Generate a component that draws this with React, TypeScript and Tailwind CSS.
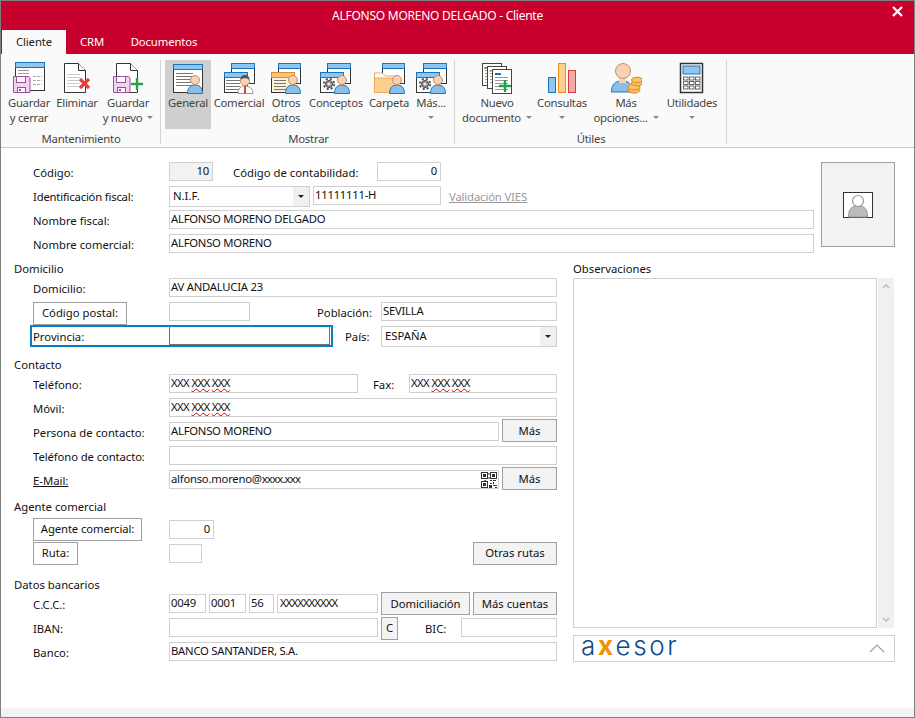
import React from "react";

const S = ({ children }: { children: React.ReactNode }) => (
  <svg width="32" height="32" viewBox="0 0 32 32" className="shrink-0">{children}</svg>
);

const Win = ({ x, y, w, h, bar = "#8fc6f0", barStroke = "#1a74bb", fill = "#fff", stroke = "#333" }: any) => (
  <g>
    <rect x={x + 0.5} y={y + 0.5} width={w} height={h} fill={fill} stroke={stroke} />
    <rect x={x + 0.5} y={y + 0.5} width={w} height={5} fill={bar} stroke={barStroke} />
  </g>
);

const Lines = ({ x, y, w, n = 4, c = "#777" }: any) => (
  <g stroke={c}>
    {Array.from({ length: n }).map((_, i) => (
      <line key={i} x1={x} x2={x + w} y1={y + i * 3 + 0.5} y2={y + i * 3 + 0.5} />
    ))}
  </g>
);

const Person = ({ cx, cy = 18 }: any) => (
  <g>
    <path d={`M${cx - 7.5} 31.5 C${cx - 7.5} ${cy + 7},${cx - 4} ${cy + 5},${cx} ${cy + 5} C${cx + 4} ${cy + 5},${cx + 7.5} ${cy + 7},${cx + 7.5} 31.5 Z`} fill="#8bbfe8" stroke="#1f78b8" />
    <circle cx={cx} cy={cy} r="4.5" fill="#f7d2b4" stroke="#c58f5e" />
  </g>
);

const Gear = ({ cx, cy }: any) => (
  <g fill="none">
    <circle cx={cx} cy={cy} r="5.2" stroke="#555" strokeWidth="1.800" strokeDasharray="2.200 1.900" />
    <circle cx={cx} cy={cy} r="3.600" fill="#888" stroke="#555" />
    <circle cx={cx} cy={cy} r="1.600" fill="#eee" />
  </g>
);

const Floppy = ({ x, y }: any) => (
  <g>
    <path d={`M${x + 0.5} ${y + 0.5}h15l1.5 1.5v14.5h-16.5z`} fill="#f0d4ee" stroke="#9c4da0" />
    <rect x={x + 3.5} y={y + 0.5} width={9} height={6} fill="#fff" stroke="#9c4da0" />
    <rect x={x + 4.5} y={y + 11.5} width={8} height={5} fill="#fff" stroke="#9c4da0" />
    <rect x={x + 6} y={y + 13} width={2} height={2} fill="#9c4da0" />
  </g>
);

const Doc = ({ x, y, w, h }: any) => (
  <g>
    <path d={`M${x + 0.5} ${y + 0.5}h${w - 7}l7 7v${h - 7}h-${w}z`} fill="#fff" stroke="#333" />
    <path d={`M${x + w - 6.5} ${y + 0.5}v7h7`} fill="#fff" stroke="#333" />
  </g>
);

const Plus = ({ cx, cy, r = 6 }: any) => (
  <g stroke="#1fa34a" strokeWidth="2.400">
    <line x1={cx - r} x2={cx + r} y1={cy} y2={cy} />
    <line x1={cx} x2={cx} y1={cy - r} y2={cy + r} />
  </g>
);

const IconGuardarCerrar = () => (
  <S>
    <Win x={2} y={0} w={29} h={28} />
    <Lines x={5} y={8} w={11} n={2} c="#999" />
    <g stroke="#aaa" strokeDasharray="3 1">
      <line x1="20" x2="29" y1="14.500" y2="14.500" />
      <line x1="20" x2="29" y1="18.500" y2="18.500" />
      <line x1="20" x2="29" y1="22.500" y2="22.500" />
    </g>
    <Floppy x={0} y={14} />
  </S>
);
const IconEliminar = () => (
  <S>
    <Doc x={3} y={1} w={21} h={29} />
    <Lines x={6} y={12} w={13} n={5} c="#ccc" />
    <g stroke="#e8413c" strokeWidth="3.200">
      <line x1="19" x2="28" y1="17" y2="26" />
      <line x1="28" x2="19" y1="17" y2="26" />
    </g>
  </S>
);
const IconGuardarNuevo = () => (
  <S>
    <Doc x={4} y={1} w={21} h={29} />
    <Floppy x={1} y={14} />
    <Plus cx={25} cy={22} />
  </S>
);
const IconGeneral = () => (
  <S>
    <Win x={1} y={2} w={29} h={28} />
    <Lines x={4} y={11} w={17} n={5} />
    <Person cx={23} cy={18} />
  </S>
);
const IconComercial = () => (
  <S>
    <Win x={8} y={1} w={23} h={20} />
    <Win x={1} y={10} w={23} h={20} />
    <Lines x={3} y={18} w={14} n={4} />
    <path d="M15 31.500c0-5 3-7.500 7-7.500s8 2.500 8 7.500z" fill="#fff" stroke="#999" />
    <circle cx="22" cy="19" r="4.500" fill="#f7d2b4" stroke="#c58f5e" />
    <path d="M17.500 18c0-4 2-5 4.500-5s4.500 1 4.500 5c-2-2.500-7-2.500-9 0z" fill="#555" />
    <path d="M21 24h2v7.500h-2z" fill="#e2373c" />
  </S>
);
const IconOtros = () => (
  <S>
    <Win x={8} y={1} w={22} h={20} />
    <Win x={1} y={10} w={23} h={20} bar="#f9c77c" barStroke="#e08a2c" fill="#fdf1d6" />
    <Lines x={4} y={18} w={12} n={4} />
    <Person cx={23} />
  </S>
);
const IconConceptos = () => (
  <S>
    <Win x={7} y={1} w={23} h={20} />
    <Win x={0} y={10} w={23} h={20} />
    <Gear cx={9} cy={22} />
    <Person cx={22} />
  </S>
);
const IconCarpeta = () => (
  <S>
    <Win x={9} y={1} w={22} h={20} />
    <path d="M1.500 11h8l3 3h11v16h-22z" fill="#fff" stroke="#eea95a" />
    <path d="M1.500 16h24v14.500h-24z" fill="#fbcf8d" stroke="#eea95a" />
    <Person cx={24} />
  </S>
);
const IconMas = () => (
  <S>
    <Win x={8} y={1} w={23} h={20} />
    <Win x={1} y={10} w={23} h={20} />
    <Gear cx={10} cy={22} />
    <Person cx={23} />
  </S>
);
const IconNuevo = () => (
  <S>
    <rect x="1.500" y="1.500" width="19" height="22" fill="#fff" stroke="#444" />
    <Lines x={4} y={5} w={13} n={6} c="#999" />
    <rect x="3.500" y="5" width="2" height="2" fill="#1fa34a" />
    <rect x="6.500" y="4.500" width="19" height="22" fill="#fff" stroke="#444" />
    <Lines x={9} y={8} w={13} n={5} c="#999" />
    <rect x="8.500" y="8" width="2" height="2" fill="#f0a030" />
    <rect x="11.500" y="7.500" width="19" height="24" fill="#fff" stroke="#444" />
    <rect x="14" y="11" width="6" height="2" fill="#1a74bb" />
    <Lines x={14} y={15} w={13} n={5} c="#999" />
    <Plus cx={24} cy={24} r={6} />
  </S>
);
const IconConsultas = () => (
  <S>
    <rect x="2.500" y="15.500" width="7" height="15" fill="#8fc6f0" stroke="#1a74bb" />
    <rect x="12.500" y="1.500" width="7" height="29" fill="#fbd08a" stroke="#ea8f24" />
    <rect x="22.500" y="8.500" width="7" height="22" fill="#f4aaa8" stroke="#dd3b38" />
  </S>
);
const IconOpciones = () => (
  <S>
    <path d="M1.500 30c0-8 4-11 11-11s9 3 9 11z" fill="#8bbfe8" stroke="#1f78b8" />
    <rect x="9" y="16" width="7" height="5" fill="#f7d2b4" />
    <circle cx="13" cy="9" r="7.500" fill="#f7d2b4" stroke="#c58f5e" />
    <g fill="#fbc26a" stroke="#e0861f">
      <ellipse cx="24" cy="28" rx="6" ry="3" />
      <ellipse cx="24" cy="25" rx="6" ry="3" />
      <ellipse cx="27" cy="21" rx="5.500" ry="2.800" />
      <ellipse cx="27" cy="18" rx="5.500" ry="2.800" />
    </g>
  </S>
);
const IconUtil = () => (
  <S>
    <rect x="4.500" y="1.500" width="22" height="29" fill="#fff" stroke="#333" strokeWidth="1.500" />
    <rect x="7" y="4" width="17" height="8" fill="#8fc6f0" stroke="#1a74bb" />
    {[15, 19.5, 24].map((y) =>
      [7.5, 13.5, 19.5].map((x) => (
        <rect key={`${x}-${y}`} x={x} y={y} width="4.500" height="3" fill="#fff" stroke="#666" />
      ))
    )}
  </S>
);

const Caret = ({ c = "#888" }: { c?: string }) => (
  <svg width="6" height="3" viewBox="0 0 6 3" className="inline-block">
    <path d="M0 0h6L3 3z" fill={c} />
  </svg>
);

const RB = ({ w, icon, l1, l2, caret, active }: any) => (
  <div className={`${w} h-[69px] flex flex-col items-center pt-[2px] text-[#444] leading-[15px] tracking-[-0.25px] ${active ? "bg-[#cfcfcf]" : ""}`}>
    <div className="h-[32px] mb-[1px]">{icon}</div>
    <div className="whitespace-nowrap">{l1}</div>
    <div className="whitespace-nowrap h-[15px] flex items-center gap-[5px]">
      {l2}
      {caret && <Caret />}
    </div>
  </div>
);

const Group = ({ w, pl, label, children }: any) => (
  <div className={`${w} ${pl} pr-[2px] h-[84px] border-r border-[#d4d4d4] flex flex-col shrink-0`}>
    <div className="flex">{children}</div>
    <div className="text-center text-[#444] leading-[15px] mt-[2px] tracking-[-0.2px]">{label}</div>
  </div>
);

const Row = ({ children }: { children: React.ReactNode }) => <div className="flex items-start h-6">{children}</div>;
const Label = ({ children, className = "" }: { children: React.ReactNode; className?: string }) => (
  <div className={`ml-[32px] w-[136px] shrink-0 pt-[3px] leading-[16px] whitespace-nowrap ${className}`}>{children}</div>
);
const Input = ({ className = "bg-white", children }: { className?: string; children?: React.ReactNode }) => (
  <div className={`h-[19px] border border-[#d0d0d0] px-px leading-[15px] tracking-[-0.25px] whitespace-nowrap overflow-hidden shrink-0 ${className}`}>{children}</div>
);
const Select = ({ className = "", children }: { className?: string; children?: React.ReactNode }) => (
  <div className={`h-[21px] border border-[#d0d0d0] bg-white flex items-stretch shrink-0 ${className}`}>
    <div className="flex-1 pl-[3px] leading-[17px]">{children}</div>
    <div className="w-[16px] bg-[#f0f0f0] flex items-center justify-center"><Caret c="#222" /></div>
  </div>
);
const Btn = ({ className = "", children }: { className?: string; children: React.ReactNode }) => (
  <div className={`h-[23px] border border-[#a0a0a0] flex items-center justify-center whitespace-nowrap shrink-0 ${className}`}>{children}</div>
);
const Heading = ({ className = "", children }: { className?: string; children: React.ReactNode }) => (
  <div className={`h-[15px] pl-[13px] leading-[11px] ${className}`}>{children}</div>
);
const Sq = ({ children }: { children: React.ReactNode }) => (
  <span className="underline decoration-wavy decoration-[#e00000] decoration-1">{children}</span>
);
const Xs = () => (
  <span className="tracking-[-0.6px]">XXX <Sq>XXX</Sq> <Sq>XXX</Sq></span>
);
const Qr = () => (
  <svg width="16" height="16" viewBox="0 0 16 16" className="ml-auto mt-px shrink-0">
    <path d="M0 0h7v7H0zM1 1v5h5V1zM9 0h7v7H9zM10 1v5h5V1zM0 9h7v7H0zM1 10v5h5v-5zM2 2h3v3H2zM11 2h3v3h-3zM2 11h3v3H2zM7.500 1h1v2h-1zM7.500 5h1v2h-1zM3 8h2v.8H3zM9 8h2v1H9zM12 8h3v1h-3zM9 11h2v1H9zM12 10h1v2h-1zM8 13h3v3H8zM12 13h4v1h-4zM14 15h2v1h-2z" fill="#333" fillRule="evenodd" />
  </svg>
);

export default function App() {
  return (
    <div className="w-[915px] h-[718px] border border-[#808080] flex flex-col bg-white text-[#111] text-[11.3px] font-['Noto_Sans',sans-serif] overflow-hidden">
      {/* Barra de título */}
      <div className="h-[53px] bg-[#c8002d] flex flex-col shrink-0 text-white">
        <div className="h-[29px] relative flex items-center justify-center text-[12px] tracking-[-0.25px]">
          <span className="ml-[-40px]">ALFONSO MORENO DELGADO - Cliente</span>
          <svg width="11" height="11" viewBox="0 0 11 11" className="absolute right-[11px] top-[5px]">
            <path d="M1 1l9 9M10 1l-9 9" stroke="#fff" strokeWidth="2.400" />
          </svg>
        </div>
        <div className="h-[24px] flex items-stretch pl-px pt-px tracking-[-0.1px]">
          <div className="w-[64px] -mt-px pt-px bg-[#fafafa] text-[#222] flex items-center justify-center">Cliente</div>
          <div className="w-[52px] flex items-center justify-center">CRM</div>
          <div className="w-[92px] flex items-center justify-center">Documentos</div>
        </div>
      </div>

      {/* Cinta */}
      <div className="h-[94px] bg-[#fafafa] border-b border-[#c8c8c8] flex pt-[6px] shrink-0">
        <Group w="w-[160px]" pl="pl-[3px]" label="Mantenimiento">
          <RB w="w-[50px]" icon={<IconGuardarCerrar />} l1="Guardar" l2="y cerrar" />
          <RB w="w-[46px]" icon={<IconEliminar />} l1="Eliminar" />
          <RB w="w-[56px]" icon={<IconGuardarNuevo />} l1="Guardar" l2="y nuevo" caret />
        </Group>
        <Group w="w-[294px]" pl="pl-[4px]" label="Mostrar">
          <RB w="w-[46px]" active icon={<IconGeneral />} l1="General" />
          <RB w="w-[56px]" icon={<IconComercial />} l1="Comercial" />
          <RB w="w-[38px]" icon={<IconOtros />} l1="Otros" l2="datos" />
          <RB w="w-[62px]" icon={<IconConceptos />} l1="Conceptos" />
          <RB w="w-[44px]" icon={<IconCarpeta />} l1="Carpeta" />
          <RB w="w-[40px]" icon={<IconMas />} l1="Más..." caret />
        </Group>
        <Group w="w-[272px]" pl="pl-[3px]" label="Útiles">
          <RB w="w-[78px]" icon={<IconNuevo />} l1="Nuevo" l2="documento" caret />
          <RB w="w-[52px]" icon={<IconConsultas />} l1="Consultas" caret />
          <RB w="w-[76px]" icon={<IconOpciones />} l1="Más" l2="opciones..." caret />
          <RB w="w-[56px]" icon={<IconUtil />} l1="Utilidades" caret />
        </Group>
      </div>

      {/* Formulario */}
      <div className="flex-1 pt-[14px] flex flex-col">
        <div className="flex">
          <div className="w-[813px] shrink-0">
            <Row>
              <Label>Código:</Label>
              <Input className="w-[44px] bg-[#f2f2f2] text-right pr-[3px]">10</Input>
              <div className="ml-[20px] w-[144px] pt-[3px] leading-[16px]">Código de contabilidad:</div>
              <Input className="w-[64px] text-right pr-[3px]">0</Input>
            </Row>
            <Row>
              <Label className="tracking-[-0.2px]">Identificación fiscal:</Label>
              <Select className="w-[141px]">N.I.F.</Select>
              <Input className="w-[128px] ml-[3px]">11111111-H</Input>
              <div className="ml-[8px] pt-[3px] leading-[16px] text-[#999] underline tracking-[-0.15px]">Validación VIES</div>
            </Row>
            <Row>
              <Label>Nombre fiscal:</Label>
              <Input className="w-[645px]">ALFONSO MORENO DELGADO</Input>
            </Row>
            <Row>
              <Label>Nombre comercial:</Label>
              <Input className="w-[645px]">ALFONSO MORENO</Input>
            </Row>
          </div>
          <div className="ml-[7px] w-[74px] h-[85px] bg-[#f2f2f2] border border-[#a0a0a0] flex items-center justify-center shrink-0">
            <svg width="30" height="26" viewBox="0 0 30 26">
              <rect x="0.500" y="0.500" width="29" height="25" fill="#fff" stroke="#333" />
              <path d="M5.500 25c0-8 3-11 9.500-11s9.500 3 9.500 11z" fill="#bbb" stroke="#999" />
              <circle cx="15" cy="9" r="5.500" fill="#fff" stroke="#999" strokeWidth="1.200" />
            </svg>
          </div>
        </div>

        <div className="flex mt-[5px]">
          <div className="w-[556px] shrink-0">
            <Heading>Domicilio</Heading>
            <Row>
              <Label>Domicilio:</Label>
              <Input className="w-[388px]">AV ANDALUCIA 23</Input>
            </Row>
            <Row>
              <Btn className="ml-[32px] w-[94px] bg-white">Código postal:</Btn>
              <Input className="ml-[42px] w-[81px]" />
              <div className="ml-[67px] w-[64px] pt-[3px] leading-[16px]">Población:</div>
              <Input className="w-[176px]">SEVILLA</Input>
            </Row>
            <Row>
              <div className="ml-[29px] -mt-px w-[303px] h-[22px] border-2 border-[#0a7cc2] flex shrink-0">
                <div className="w-[137px] pl-px pt-[2px] leading-[16px] shrink-0">Provincia:</div>
                <div className="w-[161px] h-[18px] border-x border-b border-[#707070] bg-white" />
              </div>
              <div className="ml-[12px] w-[36px] pt-[3px] leading-[16px]">País:</div>
              <Select className="w-[176px]">ESPAÑA</Select>
            </Row>

            <Heading className="mt-[9px]">Contacto</Heading>
            <Row>
              <Label>Teléfono:</Label>
              <Input className="w-[189px]"><Xs /></Input>
              <div className="ml-[15px] w-[36px] pt-[3px] leading-[16px]">Fax:</div>
              <Input className="w-[148px]"><Xs /></Input>
            </Row>
            <Row>
              <Label>Móvil:</Label>
              <Input className="w-[388px]"><Xs /></Input>
            </Row>
            <Row>
              <Label>Persona de contacto:</Label>
              <Input className="w-[330px]">ALFONSO MORENO</Input>
              <Btn className="ml-[3px] w-[55px] -mt-[3px] pt-px bg-[#f3f3f3]">Más</Btn>
            </Row>
            <Row>
              <Label className="tracking-[-0.1px]">Teléfono de contacto:</Label>
              <Input className="w-[388px]" />
            </Row>
            <Row>
              <Label className="underline">E-Mail:</Label>
              <Input className="w-[330px] flex">
                <span>alfonso.moreno@<span className="tracking-[-0.8px]">xxxx.xxx</span></span>
                <Qr />
              </Input>
              <Btn className="ml-[3px] w-[55px] -mt-[3px] pt-px bg-[#f3f3f3]">Más</Btn>
            </Row>

            <Heading className="mt-[7px] mb-[4px]">Agente comercial</Heading>
            <Row>
              <Btn className="ml-[32px] w-[109px] -mt-[2px] bg-white tracking-[-0.1px]">Agente comercial:</Btn>
              <Input className="ml-[27px] w-[45px] text-right pr-[3px]">0</Input>
            </Row>
            <Row>
              <Btn className="ml-[32px] w-[45px] -mt-[2px] bg-white">Ruta:</Btn>
              <Input className="ml-[91px] w-[33px]" />
              <Btn className="ml-auto w-[84px] -mt-[2px] bg-[#f3f3f3]">Otras rutas</Btn>
            </Row>

            <Heading className="mt-[11px]">Datos bancarios</Heading>
            <Row>
              <Label>C.C.C.:</Label>
              <Input className="w-[37px]">0049</Input>
              <Input className="ml-[3px] w-[37px]">0001</Input>
              <Input className="ml-[3px] w-[25px]">56</Input>
              <Input className="ml-[3px] w-[101px] pl-[2px]"><span className="tracking-[-0.9px]">XXXXXXXXXX</span></Input>
              <Btn className="ml-[3px] w-[89px] -mt-[2px] pt-px bg-[#f3f3f3] tracking-[-0.1px]">Domiciliación</Btn>
              <Btn className="ml-[3px] w-[84px] -mt-[2px] pt-px bg-[#f3f3f3]">Más cuentas</Btn>
            </Row>
            <Row>
              <Label>IBAN:</Label>
              <Input className="w-[209px]" />
              <Btn className="ml-[3px] w-[17px] -mt-px bg-[#f3f3f3]">C</Btn>
              <div className="ml-[27px] w-[36px] pt-[3px] leading-[16px]">BIC:</div>
              <Input className="w-[96px]" />
            </Row>
            <Row>
              <Label>Banco:</Label>
              <Input className="w-[388px]">BANCO SANTANDER, S.A.</Input>
            </Row>
          </div>

          <div className="ml-[16px] w-[322px] shrink-0 flex flex-col">
            <div className="h-[15px] leading-[11px]">Observaciones</div>
            <div className="flex h-[350px]">
              <div className="w-[304px] border border-[#d0d0d0]" />
              <div className="ml-px w-[16px] bg-[#f0f0f0] flex flex-col items-center justify-between py-[5px]">
                <svg width="8" height="6" viewBox="0 0 8 6"><path d="M1 5l3-3 3 3" fill="none" stroke="#c0c0c0" strokeWidth="1.600" /></svg>
                <svg width="8" height="6" viewBox="0 0 8 6"><path d="M1 1l3 3 3-3" fill="none" stroke="#c0c0c0" strokeWidth="1.600" /></svg>
              </div>
            </div>
            <div className="mt-[7px] h-[27px] border border-[#d0d0d0] flex items-center pl-[7px] pr-[9px]">
              <div className="font-['Inter',sans-serif] font-light text-[26px] leading-[24px] -mt-[5px] tracking-[2.6px] text-[#0d4a8c]">
                a<span className="text-[#f39200] font-bold">x</span>esor
              </div>
              <svg width="16" height="9" viewBox="0 0 16 9" className="ml-auto">
                <path d="M1 8l7-7 7 7" fill="none" stroke="#a0a0a0" strokeWidth="1.200" />
              </svg>
            </div>
          </div>
        </div>
      </div>

      <div className="h-[9px] bg-[#f3f3f3] shrink-0" />
    </div>
  );
}
